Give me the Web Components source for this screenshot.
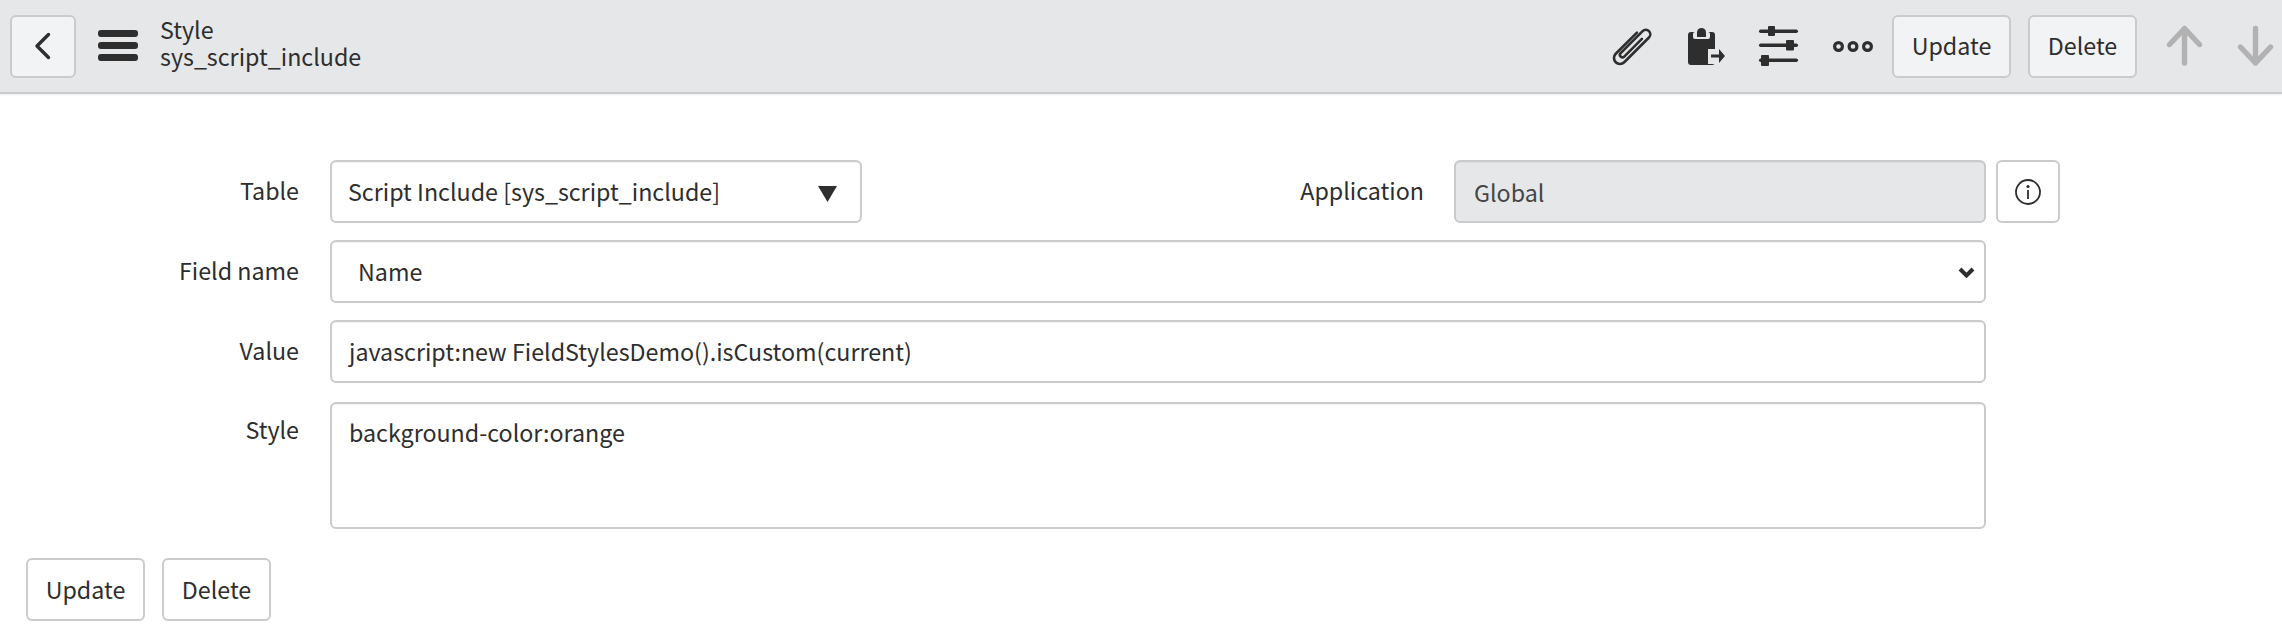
<!DOCTYPE html>
<html lang="en">
<head>
<meta charset="utf-8">
<title>Style</title>
<style>
  html, body { margin: 0; padding: 0; background: #fff; }
  body { font-family: "Noto Sans CJK SC", "Liberation Sans", sans-serif; font-size: 23.25px; color: #2e2e2e; }
</style>
</head>
<body>
<form-header title-text="Style" subtitle="sys_script_include"></form-header>
<style-form></style-form>

<template id="btn-tpl">
  <style>
    :host { display: inline-flex; }
    button {
      font: inherit; color: #2e2e2e; background: var(--btn-bg, #fff); height: 63px; width: var(--btn-w, 119px); padding: 0;
      border: 2px solid #cbcbcb; border-radius: 6px; box-sizing: border-box; line-height: 1;
    }
  </style>
  <button type="button"><slot></slot></button>
</template>

<script>
class FormButton extends HTMLElement {
  constructor() {
    super();
    this.root = this.attachShadow({mode: 'open'});
    this.root.appendChild(document.getElementById('btn-tpl').content.cloneNode(true));
  }
}
customElements.define('form-button', FormButton);

class FormHeader extends HTMLElement {
  constructor() {
    super();
    this.root = this.attachShadow({mode: 'open'});
    this.root.innerHTML = this.getTemplate();
  }

  getTemplate() {
    return `
    <style>
      :host { display: flex; align-items: center; height: 92px; background: #e6e7e9; border-bottom: 2px solid #cbcbcb; box-shadow: 0 1px 2px rgba(0,0,0,.08); }
      .back { width: 66px; height: 63px; margin-left: 10px; background: #f2f3f5; border: 2px solid #cbcbcb; border-radius: 6px; box-sizing: border-box; display: flex; align-items: center; justify-content: center; }
      .menu { margin-left: 22px; }
      .titles { margin: 0 0 7px 22px; line-height: 27px; }
      .titles div { height: 27px; white-space: nowrap; }
      .spacer { flex: 1; }
      .tools { display: flex; align-items: center; height: 100%; --btn-bg: #f2f3f5; }
      svg { display: block; overflow: visible; }
    </style>
    <div class="back"><svg width="18" height="28" viewBox="0 0 18 28"><path d="M14.500 2.500 3 14l11.500 11.500" fill="none" stroke="#2e2e2e" stroke-width="3.400" stroke-linecap="round" stroke-linejoin="round"/></svg></div>
    <svg class="menu" width="40" height="32" viewBox="0 0 40 32"><g fill="#2e2e2e"><rect y="0" width="40" height="7" rx="3"/><rect y="12" width="40" height="7" rx="3"/><rect y="24" width="40" height="7" rx="3"/></g></svg>
    <div class="titles"><div>${this.getAttribute('title-text')}</div><div>${this.getAttribute('subtitle')}</div></div>
    <div class="spacer"></div>
    <div class="tools">
      <svg width="42" height="38" viewBox="0 0 42 38" style="margin-right:35px"><path transform="rotate(45 21 19)" d="M15 6V36a6 6 0 0 0 12 0V1a4.500 4.500 0 0 0-9 0V32a2.500 2.500 0 0 0 5 0V7" fill="none" stroke="#2e2e2e" stroke-width="2.600" stroke-linecap="round"/></svg>
      <svg width="37" height="37" viewBox="0 0 37 37" style="margin-right:34px">
        <rect y="4" width="27" height="33" rx="3" fill="#2e2e2e"/>
        <rect x="5" y="4" width="17" height="7" rx="2" fill="#e6e7e9"/>
        <path d="M9 9V4.500a4.500 4.500 0 0 1 9 0V9z" fill="#2e2e2e"/>
        <rect x="20" y="21" width="10" height="15" fill="#e6e7e9"/>
        <path d="M23 26.500h8V21l6 7-6 7v-5.500h-8z" fill="#2e2e2e"/>
      </svg>
      <svg width="39" height="40" viewBox="0 0 39 40" style="margin-right:35px"><g fill="#2e2e2e"><rect y="3.500" width="39" height="3.500" rx="1.700"/><rect x="9" width="7" height="10" rx="1"/><rect y="17.500" width="39" height="3.500" rx="1.700"/><rect x="27" y="14" width="8" height="10.500" rx="1"/><rect y="32.500" width="39" height="3.500" rx="1.700"/><rect x="2" y="29" width="8" height="11" rx="1"/></g></svg>
      <svg width="40" height="11" viewBox="0 0 40 11" style="margin-right:19px"><g fill="none" stroke="#2e2e2e" stroke-width="3.200"><circle cx="5.500" cy="5.500" r="3.900"/><circle cx="20" cy="5.500" r="3.900"/><circle cx="34.500" cy="5.500" r="3.900"/></g></svg>
      <form-button style="margin-right:17px">Update</form-button>
      <form-button style="margin-right:30px;--btn-w:109px">Delete</form-button>
      <svg width="35" height="40" viewBox="0 0 35 40" style="margin-right:36px"><path d="M17.500 37V2.500M2.500 18.500l15-16 15 16" fill="none" stroke="#b2b2b2" stroke-width="5.400" stroke-linecap="round" stroke-linejoin="round"/></svg>
      <svg width="35" height="40" viewBox="0 0 35 40" style="margin-right:9px"><path d="M17.500 2.500V37M2.500 21l15 16 15-16" fill="none" stroke="#b2b2b2" stroke-width="5.400" stroke-linecap="round" stroke-linejoin="round"/></svg>
    </div>`;
  }
}
customElements.define('form-header', FormHeader);

class FieldRow extends HTMLElement {
  constructor() {
    super();
    this.root = this.attachShadow({mode: 'open'});
    this.root.innerHTML = `
    <style>
      :host { display: grid; grid-template-columns: 299px 1fr; column-gap: 31px; }
      label { text-align: right; line-height: 28px; padding-top: var(--label-top, 16px); }
      .body { display: flex; min-width: 0; }
    </style>
    <label>${this.getAttribute('label')}</label>
    <div class="body"><slot></slot></div>`;
  }
}
customElements.define('field-row', FieldRow);

class TextBox extends HTMLElement {
  constructor() {
    super();
    this.root = this.attachShadow({mode: 'open'});
    this.root.innerHTML = `
    <style>
      :host { display: flex; flex: 1; box-sizing: border-box; min-height: 63px; background: #fff; border: 2px solid #cbcbcb; border-radius: 6px; padding: 13px 17px; line-height: 32px; align-items: flex-start; justify-content: space-between; box-shadow: inset 0 1px 1px rgba(0,0,0,.05); }
      :host([disabled]) { background: #e6e7e9; color: #454545; padding: 14px 18px 12px; }
    </style>
    <slot></slot>`;
  }
}
customElements.define('text-box', TextBox);

class StyleForm extends HTMLElement {
  constructor() {
    super();
    this.root = this.attachShadow({mode: 'open'});
    this.root.innerHTML = `
    <style>
      :host { display: block; padding-top: 66px; }
      .rows { display: grid; gap: 17px; width: 1986px; }
      .top { display: grid; grid-template-columns: 862px 1fr; }
      .app { display: grid; grid-template-columns: 562px 1fr; column-gap: 30px; }
      .app label { text-align: right; line-height: 28px; padding-top: 16px; }
      .top-wrap { position: relative; }
      .info-btn { position: absolute; left: 1996px; top: 0; width: 64px; height: 63px; box-sizing: border-box; border: 2px solid #cbcbcb; border-radius: 6px; display: flex; align-items: center; justify-content: center; background: #fff; }
      .actions { display: flex; gap: 17px; padding: 29px 0 0 26px; }
      .style-row { margin-top: 2px; --label-top: 13px; }
      field-row.table-row { grid-template-columns: 299px 532px; }
      svg { display: block; flex: none; }
    </style>
    <div class="rows">
      <div class="top-wrap">
        <div class="top">
          <field-row class="table-row" label="Table"><text-box style="padding-left:16px">Script Include [sys_script_include]<svg width="19" height="16" viewBox="0 0 19 16" style="margin:11px 6px 0 0"><path d="M0 0h19L9.500 16z" fill="#2e2e2e"/></svg></text-box></field-row>
          <div class="app"><label>Application</label><text-box disabled>Global</text-box></div>
        </div>
        <div class="info-btn"><svg width="28" height="28" viewBox="0 0 28 28"><g fill="none" stroke="#2e2e2e" stroke-width="1.800"><circle cx="14" cy="14" r="12"/><path d="M14 12v9"/></g><circle cx="14" cy="8.500" r="1.600" fill="#2e2e2e"/></svg></div>
      </div>
      <field-row label="Field name"><text-box style="padding-left:26px">Name<svg width="17" height="11" viewBox="0 0 17 11" style="margin:12px -8px 0 0"><path d="M2 2l6.500 6.500L15 2" fill="none" stroke="#2e2e2e" stroke-width="4"/></svg></text-box></field-row>
      <field-row label="Value"><text-box>javascript:new FieldStylesDemo().isCustom(current)</text-box></field-row>
      <field-row class="style-row" label="Style"><text-box style="min-height:127px;padding-top:12px">background-color:orange</text-box></field-row>
    </div>
    <div class="actions"><form-button>Update</form-button><form-button style="--btn-w:109px">Delete</form-button></div>`;
  }
}
customElements.define('style-form', StyleForm);
</script>
</body>
</html>
